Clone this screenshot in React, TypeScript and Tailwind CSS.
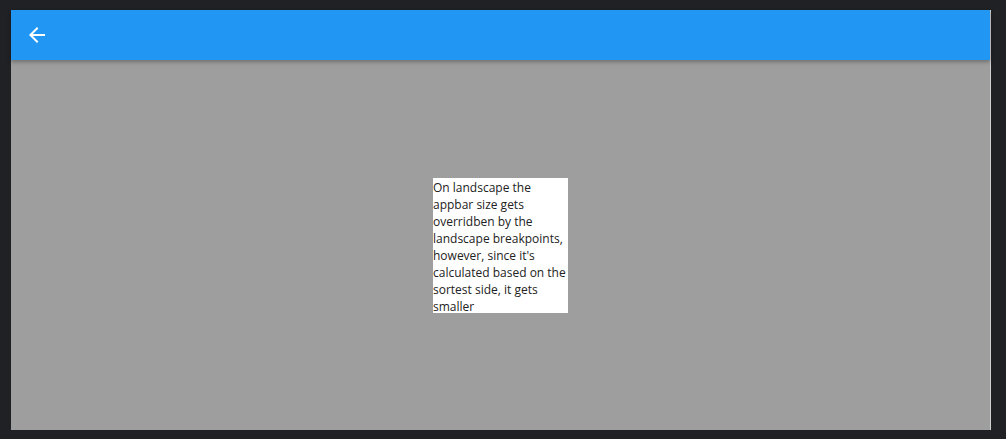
import React from "react";

const lines = [
  "On landscape the",
  "appbar size gets",
  "overridben by the",
  "landscape breakpoints,",
  "however, since it's",
  "calculated based on the",
  "sortest side, it gets",
  "smaller",
];

export default function App() {
  return (
    <div className="w-[1006px] h-[439px] bg-[#202124] pt-[10px] pl-[11px] overflow-hidden">
      <div className="w-[980px] h-[420px] flex flex-col border-r border-[#cfcfcf]">
        <div className="h-[50px] shrink-0 bg-[#2196F3] flex items-center pl-[14px] relative z-10 shadow-[0_2px_4px_rgba(0,0,0,0.3)]">
          <svg width="24" height="24" viewBox="0 0 24 24" fill="white">
            <path d="M20 11H7.83l5.59-5.59L12 4l-8 8 8 8 1.41-1.41L7.83 13H20v-2z" />
          </svg>
        </div>
        <div className="flex-1 bg-[#9e9e9e] flex items-center justify-center">
          <div
            className="w-[135px] h-[135px] pt-[1px] bg-white text-[#222] text-[12px] leading-[17px] whitespace-nowrap"
            style={{ fontFamily: '"Open Sans", sans-serif' }}
          >
            {lines.map((l) => (
              <div key={l}>{l}</div>
            ))}
          </div>
        </div>
      </div>
    </div>
  );
}
